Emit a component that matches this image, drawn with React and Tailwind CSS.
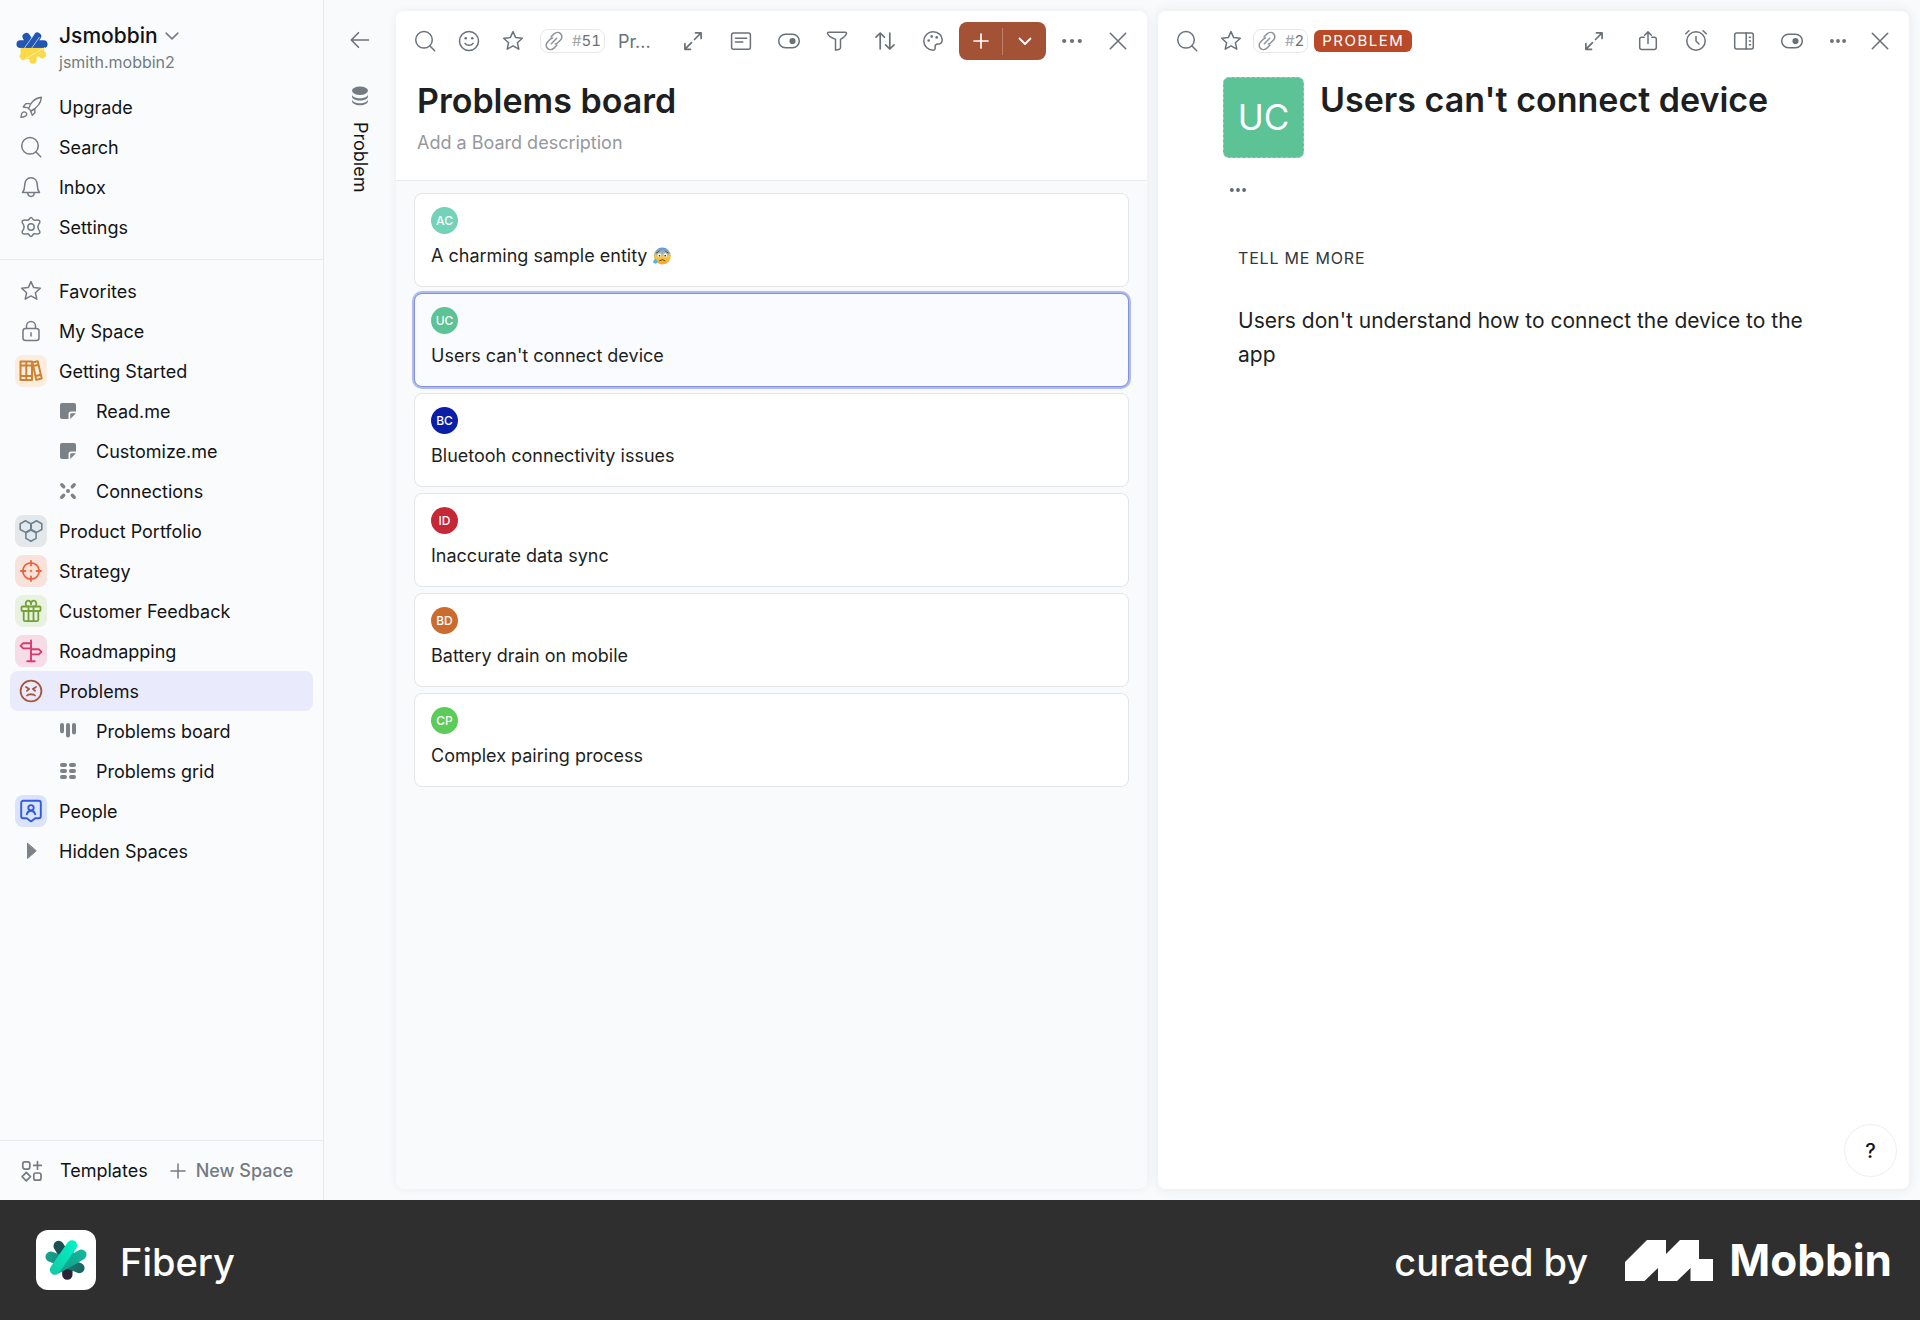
import React from "react";

function Icon({ children, className = "", size = "size-6", sw = 1.5 }) {
  return (
    <svg
      viewBox="0 0 24 24"
      className={`${size} shrink-0 ${className}`}
      fill="none"
      stroke="currentColor"
      strokeWidth={sw}
      strokeLinecap="round"
      strokeLinejoin="round"
      aria-hidden="true"
    >
      {children}
    </svg>
  );
}

const SearchIcon = () => (
  <Icon>
    <circle cx="11" cy="10.8" r="8.3" />
    <path d="M17 17l4.7 4.7" />
  </Icon>
);
const StarIcon = () => (
  <Icon>
    <path d="M12 2.600l2.700 6 6.600.7-4.900 4.400 1.400 6.500-5.800-3.300-5.800 3.300 1.400-6.500-4.900-4.400 6.600-.7z" />
  </Icon>
);
const RocketIcon = () => (
  <Icon sw={1.4}>
    <path d="M9.600 13.800C10.800 8.400 15.500 2.900 22.400 2.200 21.900 8.800 17 13.300 12 15.800z" />
    <path d="M10.500 8.600H6.800L4.200 12l4.900.9M12.500 15.800l3.300-1.900.1 3.900-2.600 2.400-1.700-4" />
    <path d="M2 22.400c.1-2.400.4-4.600 2.200-5.300 2-.7 4 .9 3.400 2.700-.6 1.700-3 2.300-5.600 2.600z" />
  </Icon>
);
const BellIcon = () => (
  <Icon>
    <path d="M3.500 17.500c1.700-1.900 2.200-4 2.200-7.300C5.700 5.900 8 2.800 12 2.800s6.300 3.100 6.300 7.400c0 3.300.5 5.400 2.200 7.300z" />
    <path d="M8.800 17.800c0 2.200 1.300 3.600 3.200 3.600s3.200-1.400 3.200-3.600" />
  </Icon>
);
const GearIcon = () => (
  <Icon>
    <path d="M10.200 4.200Q12 .8 13.800 4.200Q14.700 5.600 16.400 5.200Q20.800 4.600 20.900 6.700Q21 7.900 19.500 9.600Q18.200 12 19.500 14.400Q22.400 18 19.400 18.800Q18.400 19 16.400 18.800Q14.700 18.500 13.800 19.800Q12 23.200 10.200 19.800Q9.300 18.500 7.600 18.800Q3.200 19.400 3.100 17.300Q3 16.100 4.500 14.400Q5.800 12 4.500 9.600Q1.600 6 4.600 5.200Q5.600 5 7.600 5.200Q9.300 5.500 10.200 4.200z" />
    <circle cx="12" cy="12" r="3.200" />
  </Icon>
);
const LockIcon = () => (
  <Icon>
    <rect x="4" y="9.500" width="16" height="12" rx="2.500" />
    <path d="M7.500 9.500V7a4.500 4.500 0 0 1 9 0v2.500M12 13.800v3.200" />
  </Icon>
);
const BooksIcon = () => (
  <Icon sw={2}>
    <path d="M1.500 2.500h5.800v18.500H1.500zM7.300 2.500h5.700v18.500H7.300zM1.500 6.500H13M1.500 17H13" />
    <path d="M13.500 3.500l5.200-1.300 4 17.300-5.500 1.400zM14.500 7l5-1.200M17 17l4.800-1.200" />
  </Icon>
);
const HexIcon = () => (
  <Icon sw={1.6}>
    <path d="M6.500 1.800l5.300 2.900v5.800l-5.300 2.900-5.300-2.900V4.700z" />
    <path d="M17.500 1.800l5.300 2.900v5.800l-5.300 2.900-5.300-2.900V4.700z" />
    <path d="M12 11l5.100 2.800v5.600L12 22.200l-5.100-2.800v-5.600z" />
  </Icon>
);
const TargetIcon = () => (
  <Icon sw={1.8}>
    <circle cx="12" cy="12" r="8.200" />
    <path d="M12 2v4.500M12 17.500V22M2 12h4.500M17.500 12H22" />
    <circle cx="12" cy="12" r=".4" />
  </Icon>
);
const GiftIcon = () => (
  <Icon sw={1.8}>
    <rect x="2.500" y="7.500" width="19" height="4.500" rx="1" />
    <path d="M4.700 12v8.700a1.500 1.500 0 0 0 1.500 1.500h11.600a1.500 1.500 0 0 0 1.500-1.500V12M9.500 7.500v14.700M14.500 7.500v14.700" />
    <path d="M7.500 7.300C5.500 4 7.500 1.500 9.500 1.700c1.700.2 2.500 1.800 2.500 3.500 0-1.700.8-3.300 2.500-3.500 2-.2 4 2.300 2 5.600" />
  </Icon>
);
const SignIcon = () => (
  <Icon sw={1.9}>
    <path d="M12 1.500v20.700M8.300 22.200h7.400" />
    <path d="M12 4.200H4.200L1.600 6.800l2.600 2.600H12M12 10.200h7.800l2.600 2.600-2.600 2.600H12" />
  </Icon>
);
const AngryIcon = () => (
  <Icon sw={1.8}>
    <circle cx="12" cy="12" r="10.400" />
    <path d="M7 8l3.200 1.900L8 11.800M17 8l-3.200 1.900 2.200 1.900M8 16.500c1.400-1.700 6.600-1.700 8 0" />
  </Icon>
);
const PersonBadgeIcon = () => (
  <Icon sw={1.9}>
    <path d="M4.200 1.800h15.600a2 2 0 0 1 2 2v13.400a2 2 0 0 1-2 2h-3.600L12 22.400l-4.200-3.200H4.200a2 2 0 0 1-2-2V3.800a2 2 0 0 1 2-2z" />
    <circle cx="12" cy="8.800" r="2.700" />
    <path d="M7.800 15.200c.8-2.700 2.300-3.400 4.200-3.400s3.400.7 4.200 3.400" />
  </Icon>
);
const NoteIcon = () => (
  <Icon>
    <g fill="currentColor" stroke="none">
      <path d="M6 4h12a2 2 0 0 1 2 2v6.500h-5a2.500 2.500 0 0 0-2.500 2.500v5H6a2 2 0 0 1-2-2V6a2 2 0 0 1 2-2z" />
      <path d="M15.500 14.300H20L14.300 20v-4.500a1.200 1.200 0 0 1 1.200-1.200z" />
    </g>
  </Icon>
);
const LinksIcon = () => (
  <Icon sw={3.4}>
    <path d="M5.800 5.800l1.900 1.900M18.200 5.800l-1.900 1.900M5.800 18.200l1.900-1.900M18.200 18.200l-1.900-1.900" />
    <circle cx="12" cy="12" r="2" fill="currentColor" stroke="none" />
  </Icon>
);
const BoardIcon = () => (
  <Icon sw={4}>
    <path d="M6 6v6.200M12 6v10.400M18 6v7.400" />
  </Icon>
);
const GridIcon = () => (
  <Icon sw={3.8}>
    <path d="M5.900 6h3.200M14.900 6h3.200M5.900 12h3.200M14.900 12h3.200M5.900 18h3.200M14.900 18h3.200" />
  </Icon>
);
const TriangleIcon = () => (
  <Icon>
    <path d="M8.500 4.500v15l8.500-7.500z" fill="currentColor" strokeWidth="1" />
  </Icon>
);
const TemplatesIcon = () => (
  <Icon sw={1.7}>
    <rect x="2.800" y="2.900" width="7" height="7.200" rx="2" />
    <rect x="13.800" y="14" width="7.200" height="7.200" rx="2" />
    <path d="M17.500 2.600v7.600M13.700 6.400h7.600M6.300 13.400l4.200 4.200-4.200 4.200-4.200-4.200z" />
  </Icon>
);
const PlusIcon = ({ sw = 1.5 }) => (
  <Icon sw={sw}>
    <path d="M12 5v14M5 12h14" />
  </Icon>
);
const CloseIcon = () => (
  <Icon sw={1.6}>
    <path d="M4.300 4.300l15.400 15.400M19.700 4.300L4.300 19.700" />
  </Icon>
);
const DotsIcon = () => (
  <Icon>
    <g fill="currentColor" stroke="none">
      <circle cx="4.200" cy="12" r="2.100" />
      <circle cx="12" cy="12" r="2.100" />
      <circle cx="19.800" cy="12" r="2.100" />
    </g>
  </Icon>
);
const DotsSmallIcon = () => (
  <Icon>
    <g fill="currentColor" stroke="none">
      <circle cx="5.900" cy="12" r="1.900" />
      <circle cx="12" cy="12" r="1.900" />
      <circle cx="18.100" cy="12" r="1.900" />
    </g>
  </Icon>
);
const ExpandIcon = () => (
  <Icon sw={1.7}>
    <path d="M14.500 3.900h5.600v5.600M20 4l-6.500 6.500M9.500 20.300H3.900v-5.600M4 20.200l6.500-6.500" />
  </Icon>
);
const ToggleIcon = () => (
  <Icon>
    <rect x="1.700" y="5.300" width="20.600" height="13.400" rx="6.700" />
    <circle cx="15.500" cy="12" r="3.100" fill="currentColor" stroke="none" />
  </Icon>
);
const SmileIcon = () => (
  <Icon>
    <circle cx="12" cy="12" r="9.500" />
    <path d="M8 14.300c1.500 2.600 6.500 2.600 8 0" />
    <circle cx="8.700" cy="9.200" r="1.300" fill="currentColor" stroke="none" />
    <circle cx="15.300" cy="9.200" r="1.300" fill="currentColor" stroke="none" />
  </Icon>
);
const TextBoxIcon = () => (
  <Icon>
    <rect x="2.600" y="4" width="18.800" height="16.200" rx="2" />
    <path d="M6.400 9.200h11.200M6.400 13h7.400" />
  </Icon>
);
const FilterIcon = () => (
  <Icon>
    <path d="M3.700 3.200h16.600q1.500 0 1.100 1.500-.6 2.800-5.900 5.700v8q0 2-5 2.700v-10.700Q3.200 7.500 2.600 4.700 2.200 3.200 3.700 3.200z" />
  </Icon>
);
const SortIcon = () => (
  <Icon sw={1.7}>
    <path d="M7.200 19.800V4M3 8.200L7.200 4l4.200 4.200M16.800 4.200V20M12.600 15.800l4.200 4.200 4.200-4.200" />
  </Icon>
);
const PaletteIcon = () => (
  <Icon>
    <path d="M12 2.800c5.200 0 9.200 3.600 9.200 7.900 0 2.500-1.400 4-3.600 4.300-2 .2-3.600.2-3.500 2.200.1 1.700.6 4-2.100 4-5 0-9.200-4-9.200-9.200S7 2.800 12 2.800z" />
    <g fill="currentColor" stroke="none">
      <circle cx="7.700" cy="11.500" r="1.300" />
      <circle cx="10.700" cy="7.400" r="1.300" />
      <circle cx="15.700" cy="8.400" r="1.300" />
    </g>
  </Icon>
);
const LinkIcon = () => (
  <Icon size="size-5" sw={1.8}>
    <path d="M8.600 7l3.600-3.600c2.300-2.200 5.600-2.100 7.600-.2 2.100 2 2.200 5.400 0 7.700L16.500 14.200c-.9.9-1.800 1.300-2.800 1.500M15.400 17l-3.600 3.600c-2.300 2.200-5.600 2.100-7.600.2-2.100-2-2.200-5.400 0-7.700L7.500 9.800c.9-.9 1.800-1.300 2.800-1.500M8.800 15.200l6.400-6.400" />
  </Icon>
);
const ShareIcon = () => (
  <Icon>
    <path d="M8.200 8.300H5.500a1.800 1.800 0 0 0-1.800 1.800v8.500a1.800 1.800 0 0 0 1.800 1.800h13a1.800 1.800 0 0 0 1.800-1.800v-8.500a1.800 1.800 0 0 0-1.800-1.800h-2.700M12 14.500V3M8.600 6.200L12 2.900l3.400 3.300" />
  </Icon>
);
const AlarmIcon = () => (
  <Icon>
    <circle cx="12" cy="12" r="9.200" />
    <path d="M12 7.500V12l3 3M1.700 4.800l3.200-3.100M22.300 4.800l-3.200-3.100" />
  </Icon>
);
const PanelIcon = () => (
  <Icon>
    <rect x="2.700" y="4" width="18.600" height="16" rx="2" />
    <path d="M14.200 4v16M17.300 8.300h1.200M17.300 12h1.200M17.300 15.700h1.200" />
  </Icon>
);
const BackIcon = () => (
  <Icon sw={1.6}>
    <path d="M20.500 12h-17M10.500 4.700L3.300 12l7.200 7.300" />
  </Icon>
);
const DatabaseIcon = () => (
  <Icon>
    <ellipse cx="12" cy="6.800" rx="8" ry="4.200" fill="currentColor" stroke="none" />
    <path d="M4 10.300c0 2.400 3.600 4 8 4s8-1.600 8-4v2.200c0 2.400-3.600 4-8 4s-8-1.600-8-4zM4 15.300c0 2.400 3.600 4 8 4s8-1.600 8-4v1.700c0 2.600-3.600 4.200-8 4.200s-8-1.600-8-4.200z" fill="currentColor" stroke="none" />
  </Icon>
);

function WorkspaceLogo() {
  return (
    <svg viewBox="0 0 96 96" className="size-8 shrink-0" strokeLinecap="round" fill="none" aria-hidden="true">
      <g stroke="#2255b4" strokeWidth="23">
        <path d="M31 14l12 20M64 13L50 34M13 36h70" />
      </g>
      <path d="M2 36q0 11 10 11h72q10 0 10-11z" fill="#2255b4" />
      <path d="M12 48h74q-2 12-12 20l-22 14-32-2q-8-14-6-32z" fill="#fada46" />
      <g stroke="#fada46" strokeWidth="22">
        <path d="M22 73l10-8M51 84V66M79 68l-12-8" />
      </g>
      <path d="M26 47L54 8M48 47L70 16M32 78l54-31" stroke="#fafbfd" strokeWidth="2" />
    </svg>
  );
}

function FiberyLogo() {
  return (
    <svg viewBox="0 0 180 180" className="size-15 shrink-0 rounded-xl bg-white" strokeLinecap="round" fill="none" role="img" aria-label="Fibery">
      <defs>
        <linearGradient id="teal" x1="30" y1="70" x2="145" y2="125" gradientUnits="userSpaceOnUse">
          <stop offset="0" stopColor="#17a492" />
          <stop offset="1" stopColor="#1a615f" />
        </linearGradient>
        <linearGradient id="mint" x1="150" y1="70" x2="60" y2="120" gradientUnits="userSpaceOnUse">
          <stop offset="0" stopColor="#12b99c" />
          <stop offset="1" stopColor="#0f9d88" />
        </linearGradient>
        <linearGradient id="bright" x1="110" y1="40" x2="55" y2="125" gradientUnits="userSpaceOnUse">
          <stop offset="0" stopColor="#00f0c4" />
          <stop offset="1" stopColor="#12cda8" />
        </linearGradient>
      </defs>
      <circle cx="90" cy="88" r="31" fill="#14907f" />
      <g strokeWidth="31">
        <path d="M68 48l22 36" stroke="#1c5052" />
        <path d="M94 134V112" stroke="#2a2339" />
        <path d="M44 80l86 34" stroke="url(#teal)" />
        <path d="M136 74L66 114" stroke="url(#mint)" />
        <path d="M108 46L57 119" stroke="url(#bright)" />
      </g>
    </svg>
  );
}

function AnxiousEmoji() {
  return (
    <svg viewBox="0 0 54 54" className="size-[18px] shrink-0" role="img" aria-label="anxious face with sweat">
      <defs>
        <linearGradient id="face" x1="0" y1="0" x2="0" y2="1">
          <stop offset="0" stopColor="#5b93dd" />
          <stop offset=".35" stopColor="#a9b9b4" />
          <stop offset=".55" stopColor="#fcc83c" />
          <stop offset="1" stopColor="#f3a62a" />
        </linearGradient>
      </defs>
      <circle cx="28" cy="27" r="25.500" fill="url(#face)" />
      <ellipse cx="19" cy="25" rx="5" ry="6" fill="#fff" />
      <ellipse cx="37" cy="25" rx="5" ry="6" fill="#fff" />
      <circle cx="19.500" cy="26" r="2.500" fill="#5a3410" />
      <circle cx="36.500" cy="26" r="2.500" fill="#5a3410" />
      <path d="M10 18q6-1 9-6M46 18q-6-1-9-6M20 41q8-7 16 0" stroke="#6b4416" strokeWidth="3" fill="none" strokeLinecap="round" />
      <path d="M7 34q7 8 6 12-2 4-6 4t-6-4q-1-4 6-12z" fill="#4db5f5" />
    </svg>
  );
}

function NavItem({ icon, label, tile = "text-[#747b82]", active }) {
  return (
    <li>
      <a
        href="#"
        className={`mx-[10px] flex h-10 items-center rounded-lg pl-[5px] ${active ? "bg-[#e9ebfd]" : ""}`}
      >
        <span className={`flex size-8 items-center justify-center rounded-lg ${tile}`}>{icon}</span>
        <span className="ml-3">{label}</span>
      </a>
    </li>
  );
}

function SubItem({ icon, label }) {
  return (
    <li>
      <a href="#" className="mx-[10px] flex h-10 items-center rounded-lg pl-[46px]">
        <span className="text-[#7b8288]">{icon}</span>
        <span className="ml-4">{label}</span>
      </a>
    </li>
  );
}

function ToolButton({ label, width = "w-12", children }) {
  return (
    <button type="button" aria-label={label} className={`flex h-10 shrink-0 items-center justify-center text-[#6a7178] ${width}`}>
      {children}
    </button>
  );
}

function IdChip({ id }) {
  return (
    <button type="button" className="flex h-6 shrink-0 items-center gap-2 rounded-lg border border-[#e6e8ea] px-[3px] text-[15px] text-[#6a7178]">
      <span className="text-[#8d9399]"><LinkIcon /></span>
      <span className="tabular-nums"><span className="text-[#a3a8ad]">#</span>{id}</span>
    </button>
  );
}

function Card({ initials, color, title, emoji, selected }) {
  return (
    <li
      className={`flex h-[94px] flex-col rounded-lg border pl-4 pt-[13px] ${
        selected ? "border-[#8090de] bg-[#fafbff] ring-2 ring-[#b0bbec]" : "border-[#e3e5e8] bg-white"
      }`}
    >
      <span className={`flex size-[27px] items-center justify-center rounded-full text-xs font-medium text-white ${color}`}>{initials}</span>
      <span className="mt-2 flex items-center gap-[6px] leading-7">
        {title}
        {emoji}
      </span>
    </li>
  );
}

const cards = [
  { initials: "AC", color: "bg-[#73d2b7]", title: "A charming sample entity", emoji: <AnxiousEmoji /> },
  { initials: "UC", color: "bg-[#5bc396]", title: "Users can't connect device", selected: true },
  { initials: "BC", color: "bg-[#0a1fa8]", title: "Bluetooh connectivity issues" },
  { initials: "ID", color: "bg-[#c62836]", title: "Inaccurate data sync" },
  { initials: "BD", color: "bg-[#cb6c2e]", title: "Battery drain on mobile" },
  { initials: "CP", color: "bg-[#5bcb59]", title: "Complex pairing process" },
];

function Sidebar() {
  return (
    <nav className="flex w-[324px] shrink-0 flex-col border-r border-[#e6e8eb]">
      <header className="flex h-[87px] items-start pl-4 pt-5">
        <div className="pt-3"><WorkspaceLogo /></div>
        <div className="ml-[11px]">
          <button type="button" className="flex items-center gap-1 text-[21px] font-medium leading-8">
            Jsmobbin
            <Icon size="size-5" className="text-[#747b82]" sw={1.9}>
              <path d="M5 8.500l7 7 7-7" />
            </Icon>
          </button>
          <p className="text-base leading-5 text-[#747b82]">jsmith.mobbin2</p>
        </div>
      </header>
      <ul className="border-b border-[#e6e8eb] pb-3">
        <NavItem icon={<RocketIcon />} label="Upgrade" />
        <NavItem icon={<SearchIcon />} label="Search" />
        <NavItem icon={<BellIcon />} label="Inbox" />
        <NavItem icon={<GearIcon />} label="Settings" />
      </ul>
      <ul className="pt-[11px]">
        <NavItem icon={<StarIcon />} label="Favorites" />
        <NavItem icon={<LockIcon />} label="My Space" />
        <NavItem icon={<BooksIcon />} label="Getting Started" tile="bg-[#fbede0] text-[#ce8231]" />
        <SubItem icon={<NoteIcon />} label="Read.me" />
        <SubItem icon={<NoteIcon />} label="Customize.me" />
        <SubItem icon={<LinksIcon />} label="Connections" />
        <NavItem icon={<HexIcon />} label="Product Portfolio" tile="bg-[#e4e8eb] text-[#6c8294]" />
        <NavItem icon={<TargetIcon />} label="Strategy" tile="bg-[#fae2dc] text-[#e8663b]" />
        <NavItem icon={<GiftIcon />} label="Customer Feedback" tile="bg-[#e9f2e0] text-[#74a03a]" />
        <NavItem icon={<SignIcon />} label="Roadmapping" tile="bg-[#f6dce5] text-[#d83a72]" />
        <NavItem icon={<AngryIcon />} label="Problems" tile="text-[#a8553c]" active />
        <SubItem icon={<BoardIcon />} label="Problems board" />
        <SubItem icon={<GridIcon />} label="Problems grid" />
        <NavItem icon={<PersonBadgeIcon />} label="People" tile="bg-[#dae3fa] text-[#2f5be0]" />
        <NavItem icon={<TriangleIcon />} label="Hidden Spaces" tile="text-[#7b8288]" />
      </ul>
      <div className="mt-auto flex h-[60px] items-center border-t border-[#e6e8eb] pl-5">
        <button type="button" className="flex items-center gap-4">
          <span className="text-[#747b82]"><TemplatesIcon /></span>
          Templates
        </button>
        <button type="button" className="ml-[18px] flex items-center gap-[6px] font-medium text-[#747b82]">
          <PlusIcon />
          New Space
        </button>
      </div>
    </nav>
  );
}

function BoardPanel() {
  return (
    <section className="flex min-w-0 flex-1 flex-col rounded-lg bg-[#f9fafb] shadow-[0_0_8px_rgba(60,70,80,0.08)]">
      <header className="h-[170px] rounded-t-lg border-b border-[#e9ebed] bg-white">
        <div className="flex h-[60px] items-center px-[7px]">
          <ToolButton label="Search" width="w-11"><SearchIcon /></ToolButton>
          <ToolButton label="Set icon" width="w-11"><SmileIcon /></ToolButton>
          <ToolButton label="Favorite" width="w-11"><StarIcon /></ToolButton>
          <div className="ml-[5px] mr-[13px]"><IdChip id="51" /></div>
          <span className="text-[#6a7178]">Pr...</span>
          <div className="ml-auto flex items-center">
            <ToolButton label="Expand"><ExpandIcon /></ToolButton>
            <ToolButton label="Description"><TextBoxIcon /></ToolButton>
            <ToolButton label="Fields"><ToggleIcon /></ToolButton>
            <ToolButton label="Filter"><FilterIcon /></ToolButton>
            <ToolButton label="Sort"><SortIcon /></ToolButton>
            <ToolButton label="Colors"><PaletteIcon /></ToolButton>
            <div className="mx-[2px] flex h-[38px] w-[87px] items-center rounded-lg bg-[#a35236] text-white">
              <button type="button" aria-label="Add" className="flex h-full flex-1 items-center justify-center"><PlusIcon sw={1.7} /></button>
              <span className="h-[27px] w-px bg-[#c08069]" />
              <button type="button" aria-label="More ways to add" className="flex h-full flex-1 items-center justify-center">
                <Icon sw={1.8}><path d="M6.500 9.500l5.500 5.500 5.500-5.500" /></Icon>
              </button>
            </div>
            <ToolButton label="More"><DotsIcon /></ToolButton>
            <ToolButton label="Close" width="w-11"><CloseIcon /></ToolButton>
          </div>
        </div>
        <h1 className="pl-[21px] text-[34px] font-semibold leading-[60px] text-[#1d1f21]">Problems board</h1>
        <p className="pl-[21px] leading-6 text-[#96999d]">Add a Board description</p>
      </header>
      <ul className="flex flex-col gap-[6px] px-[18px] pt-3 text-[#1d1f21]">
        {cards.map((c) => <Card key={c.initials} {...c} />)}
      </ul>
    </section>
  );
}

function EntityPanel() {
  return (
    <section className="relative flex min-w-0 flex-1 flex-col rounded-lg bg-white shadow-[0_0_12px_rgba(60,70,80,0.10)]">
      <div className="flex h-[60px] items-center pl-[7px] pr-[9px]">
        <ToolButton label="Search" width="w-11"><SearchIcon /></ToolButton>
        <ToolButton label="Favorite" width="w-11"><StarIcon /></ToolButton>
        <IdChip id="2" />
        <span className="ml-[6px] flex h-[22px] items-center rounded-md bg-[#ba4928] px-2 text-[15px] tracking-widest text-white">PROBLEM</span>
        <div className="ml-auto flex items-center">
          <ToolButton label="Expand"><ExpandIcon /></ToolButton>
          <div className="ml-[6px]"><ToolButton label="Share"><ShareIcon /></ToolButton></div>
          <ToolButton label="Reminder"><AlarmIcon /></ToolButton>
          <ToolButton label="Side panel"><PanelIcon /></ToolButton>
          <ToolButton label="Fields"><ToggleIcon /></ToolButton>
          <ToolButton label="More" width="w-11"><DotsSmallIcon /></ToolButton>
          <ToolButton label="Close" width="w-10"><CloseIcon /></ToolButton>
        </div>
      </div>
      <div className="flex items-start pl-[65px] pt-[6px]">
        <div className="flex size-[81px] items-center justify-center rounded-md border border-dashed border-[#b9c4b4] bg-[#5bc396] text-[35px] text-white">UC</div>
        <h1 className="ml-4 text-[34px] font-semibold leading-[46px] text-[#1d1f21]">Users can't connect device</h1>
      </div>
      <button type="button" aria-label="More fields" className="ml-17 mt-5 w-6 text-[#5f666d]"><DotsSmallIcon /></button>
      <h2 className="ml-20 mt-11 text-base leading-6 tracking-wider text-[#33373b]">TELL ME MORE</h2>
      <p className="mx-20 mt-[34px] text-[21px] leading-[34px] text-[#1d1f21]">
        Users don't understand how to connect the device to the app
      </p>
      <button
        type="button"
        aria-label="Help"
        className="absolute bottom-3 right-3 flex size-[53px] items-center justify-center rounded-full border border-[#eceeef] bg-white text-xl font-medium"
      >
        ?
      </button>
    </section>
  );
}

export default function App() {
  return (
    <div className="flex min-h-screen flex-col bg-[#fafbfd] font-['Inter',sans-serif] text-[18px] text-[#111315]">
      <main className="flex flex-1">
        <Sidebar />
        <div className="flex flex-1 bg-[#f9fafc]">
          <aside className="flex w-18 shrink-0 flex-col items-center pt-5">
            <button type="button" aria-label="Back" className="flex h-10 items-center text-[#6a7178]"><BackIcon /></button>
            <span className="mt-6 text-[#747b82]"><DatabaseIcon /></span>
            <span className="mt-[14px] leading-6 [writing-mode:vertical-rl]">Problem</span>
          </aside>
          <div className="flex min-w-0 flex-1 gap-[11px] pb-[11px] pr-[11px] pt-[11px]">
            <BoardPanel />
            <EntityPanel />
          </div>
        </div>
      </main>
      <footer className="flex h-[120px] items-center bg-[#2f2f2f] pl-9 pr-7 text-white">
        <FiberyLogo />
        <span className="ml-6 pt-1 text-[38px] font-medium">Fibery</span>
        <span className="ml-auto pt-1 text-[38px] font-medium">curated by</span>
        <svg viewBox="0 0 88 41" className="ml-[37px] h-[41px] w-[88px] shrink-0" fill="currentColor" aria-hidden="true">
          <path d="M0 22L22 0H41V14L55 0H74V19H88V41H65.500V28L52 41H33V28L19.500 41H0z" />
        </svg>
        <span className="ml-4 text-[44px] font-bold">Mobbin</span>
      </footer>
    </div>
  );
}
